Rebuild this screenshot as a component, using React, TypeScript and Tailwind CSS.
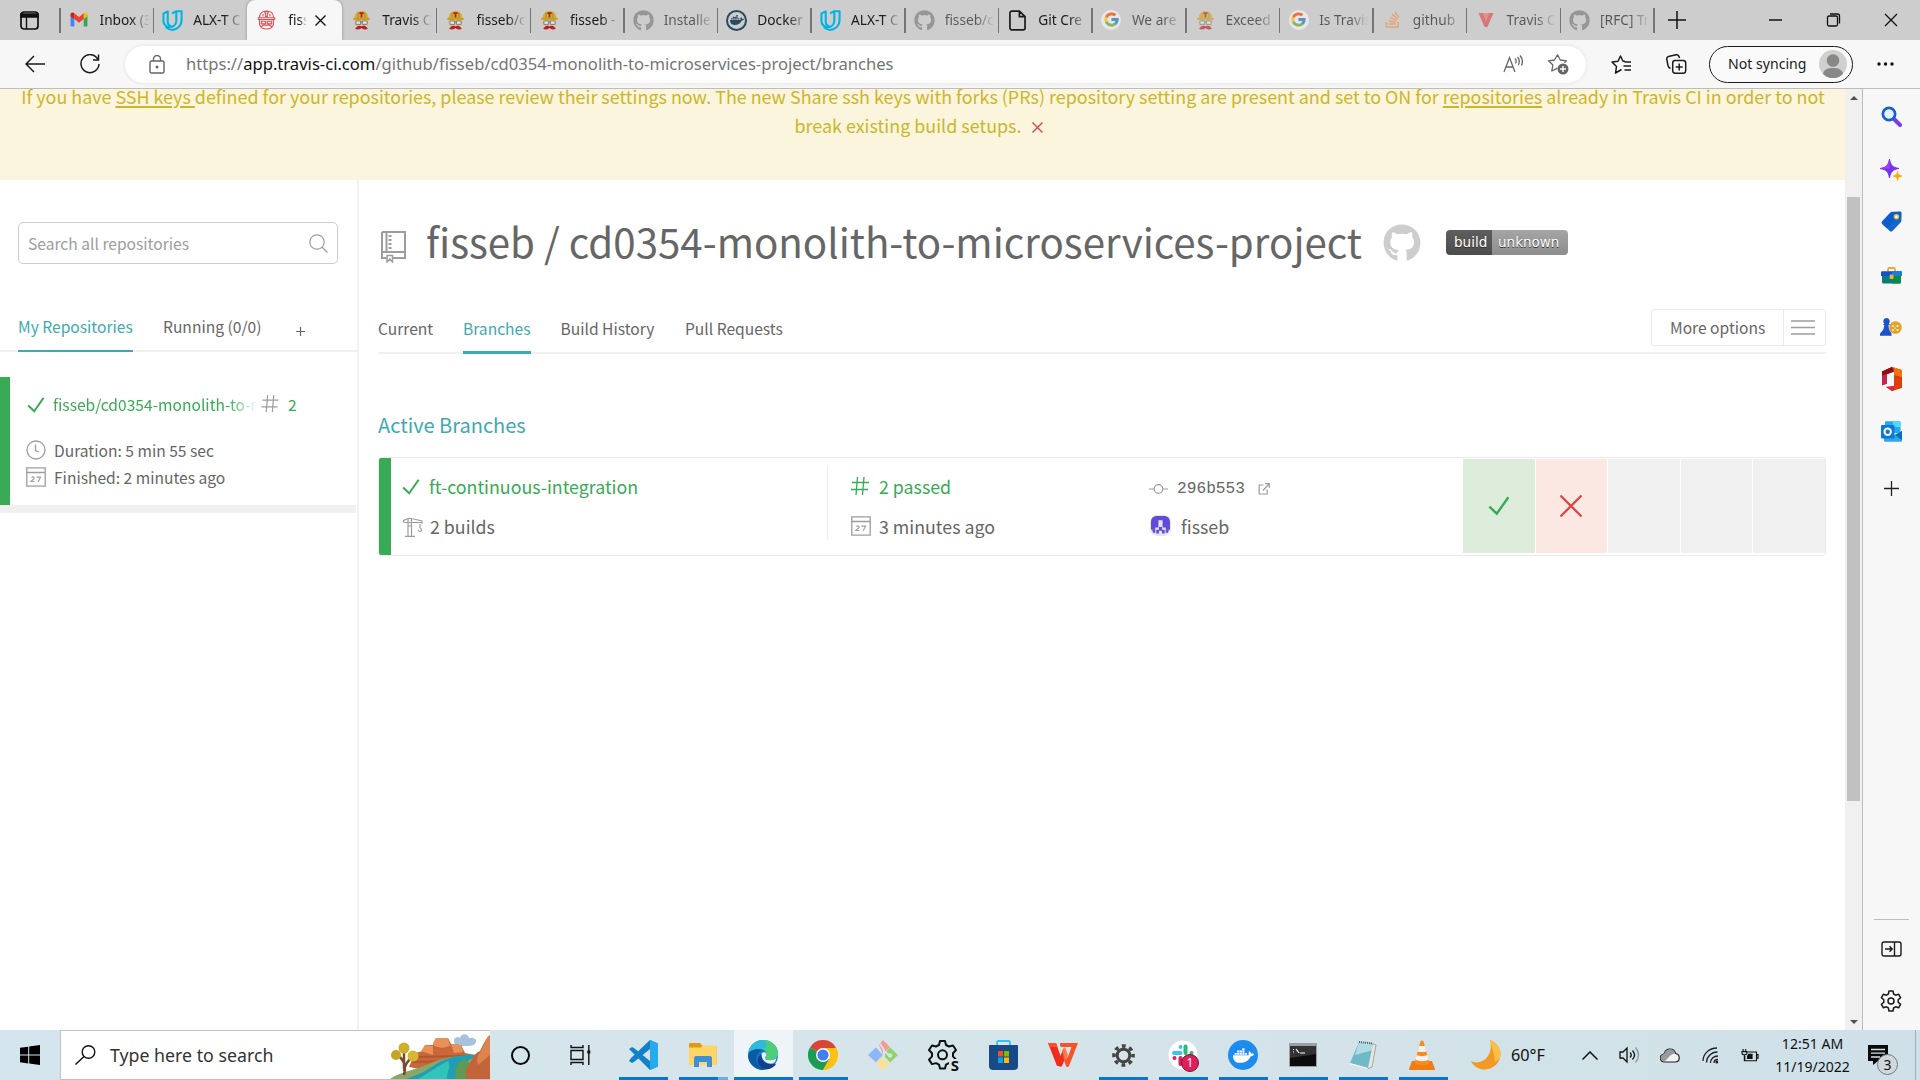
import type { ReactNode } from "react";
import { FaGithub, FaDocker, FaStackOverflow } from "react-icons/fa";
import { FcGoogle } from "react-icons/fc";

/* ---------- favicons ---------- */

function Gmail() {
  return (
    <svg viewBox="0 0 20 16" className="h-[15px] w-5">
      <path d="M1 3v11.500a1 1 0 0 0 1 1h3V6.500z" fill="#4285f4" />
      <path d="M19 3v11.500a1 1 0 0 1-1 1h-3V6.500z" fill="#34a853" />
      <path d="M15 1.200V7.500l4-3V2.800C19 .8 17 0 15.400 1z" fill="#fbbc04" />
      <path d="M5 7.500V1.200l5 4 5-4v6.300l-5 4z" fill="#ea4335" />
      <path d="M1 2.800v1.700l4 3V1.200C3 0 1 .8 1 2.800z" fill="#c5221f" />
    </svg>
  );
}

function Udacity() {
  return (
    <svg viewBox="0 0 22 22" className="h-[21px] w-[21px]" fill="none" stroke="#02b3e4" strokeWidth="2.200" strokeLinejoin="round">
      <path d="M1.500 3.500 6 1.500v10.500c0 2.500 1.500 4.500 4 5.500-1.500 1-3 .8-4.500 0-2.500-1.300-4-3.500-4-6.500z" />
      <path d="M10.500 3.500 15 1.300v9.500c0 3.500-2 6.500-5 7M15 1.300h5.500v9.500c0 5.500-4 9.500-9.500 10-3 0-5.500-1.300-7-3.500" />
    </svg>
  );
}

function TravisOutline() {
  return (
    <svg viewBox="0 0 22 24" className="h-[22px] w-[19px]" fill="none" stroke="#e5484d" strokeWidth="1.200">
      <path d="M3 9C3 4 6.500 1.500 11 1.500S19 4 19 9M1.500 9.500h19v2h-19zM9 2h4v2h-1v4h-2V4H9z" />
      <path d="M3 12v5c1 4 4.500 5.500 8 5.500s7-1.500 8-5.500v-5M5 13.500h5v3H5zM12 13.500h5v3h-5zM5 20c1.500-2.500 4-2.500 6-1.500 2-1 4.500-1 6 1.500M7 5v3M15 5v3" />
    </svg>
  );
}

function Travis() {
  return (
    <svg viewBox="0 0 22 24" className="h-[21px] w-[19px]">
      <path d="M3 11h16v6c-1 4-4 5.500-8 5.500S4 21 3 17z" fill="#dcc4a4" />
      <path d="M3 9.500C3 4 6.500 1 11 1s8 3 8 8.500z" fill="#d3ad35" />
      <path d="M7 3v6M15 3v6" stroke="#a98312" strokeWidth="1" />
      <path d="M8.500 2.500h5v2h-1.500v4h-2v-4H8.500z" fill="#b01e23" />
      <path d="M1.500 9h19v2.300h-19z" fill="#c79c22" />
      <path d="M4.500 12.500h5.500v4H4.500zM12 12.500h5.500v4H12zM10 13.500h2" fill="#dfe5e7" stroke="#77736c" strokeWidth="1" />
      <path d="M3.500 21.500c1.500-.5 2-3 4.500-3.300 1.500-.2 2.500.3 3 .8.500-.5 1.500-1 3-.8 2.500.3 3 2.800 4.500 3.300-2.500 1.300-6 1-7.500-.8-1.500 1.800-5 2.100-7.500.8z" fill="#b5202c" />
    </svg>
  );
}

function DockerRound() {
  return (
    <span className="flex h-[21px] w-[21px] items-center justify-center rounded-full border-2 border-[#2a4a5e]">
      <FaDocker size={14} color="#2a4a5e" />
    </span>
  );
}

function Page() {
  return (
    <svg viewBox="0 0 18 22" className="h-[21px] w-[17px]" fill="none" stroke="#1b1b1b" strokeWidth="1.800" strokeLinejoin="round">
      <path d="M3 1h8l6 6v12a2 2 0 0 1-2 2H3a2 2 0 0 1-2-2V3a2 2 0 0 1 2-2zM11 1v6h6" />
    </svg>
  );
}

function GoogleRound() {
  return (
    <span className="flex h-5 w-5 items-center justify-center rounded-full bg-white/80">
      <FcGoogle size={17} />
    </span>
  );
}

function Vee() {
  return (
    <svg viewBox="0 0 16 15" className="h-[14px] w-4">
      <path d="M0 0h5l3 8 3-8h5L9.500 15h-3z" fill="#e04a4a" />
      <path d="M4.500 0h7L8 9z" fill="#ec7070" />
    </svg>
  );
}

/* ---------- browser chrome ---------- */

const tabs: { icon: ReactNode; label: string; faded?: boolean; active?: boolean }[] = [
  { icon: <Gmail />, label: "Inbox (3" },
  { icon: <Udacity />, label: "ALX-T C" },
  { icon: <TravisOutline />, label: "fiss", active: true },
  { icon: <Travis />, label: "Travis C" },
  { icon: <Travis />, label: "fisseb/c" },
  { icon: <Travis />, label: "fisseb -" },
  { icon: <FaGithub size={21} color="#77797b" />, label: "Installe", faded: true },
  { icon: <DockerRound />, label: "Docker" },
  { icon: <Udacity />, label: "ALX-T C" },
  { icon: <FaGithub size={21} color="#77797b" />, label: "fisseb/c", faded: true },
  { icon: <Page />, label: "Git Cre" },
  { icon: <GoogleRound />, label: "We are", faded: true },
  { icon: <Travis />, label: "Exceed", faded: true },
  { icon: <GoogleRound />, label: "Is Travis", faded: true },
  { icon: <FaStackOverflow size={19} color="#f0904a" />, label: "github", faded: true },
  { icon: <Vee />, label: "Travis C", faded: true },
  { icon: <FaGithub size={21} color="#77797b" />, label: "[RFC] Tr", faded: true },
];

const fade = "[mask-image:linear-gradient(to_right,black_62%,transparent_100%)]";

function TabStrip() {
  return (
    <div className="flex h-10 bg-[#cdcdcd] text-[13.700px] text-[#1b1b1b]">
      <div className="flex w-[59px] shrink-0 items-center justify-center">
        <svg viewBox="0 0 19 19" className="h-[19px] w-[19px]" fill="none" stroke="#111" strokeWidth="1.700">
          <rect x="1" y="1" width="17" height="17" rx="3" />
          <path d="M1 3h17v3H1z" fill="#111" />
          <path d="M6.500 6v12" strokeWidth="1.400" />
        </svg>
      </div>
      {tabs.map((t, i) =>
        t.active ? (
          <div key={i} className="z-10 ml-px flex w-[95px] shrink-0 items-center rounded-t-lg bg-[#f7f7f7] pl-[9px] shadow-[0_0_3px_rgba(0,0,0,0.35)] [clip-path:inset(-4px_-4px_0_-4px)]">
            <span className="flex w-5 justify-center">{t.icon}</span>
            <span className="ml-[12px] w-[19px] overflow-hidden whitespace-nowrap [mask-image:linear-gradient(to_right,black_60%,transparent)]">{t.label}</span>
            <svg viewBox="0 0 11 11" className="ml-2 h-[11px] w-[11px]" stroke="#111" strokeWidth="1.400">
              <path d="M.5.500l10 10M10.500.500l-10 10" />
            </svg>
          </div>
        ) : (
          <div key={i} className="flex w-[93.650px] shrink-0 items-center">
            <span className={i === 3 || i === 2 ? "h-[25px] w-px" : "h-[25px] w-[1.500px] bg-[#757575]"} />
            <span className={t.faded ? "flex flex-1 items-center opacity-65" : "flex flex-1 items-center"}>
              <span className="ml-2 flex w-[21px] justify-center">{t.icon}</span>
              <span className={"ml-[10px] w-[50px] overflow-hidden whitespace-nowrap " + fade}>{t.label}</span>
            </span>
          </div>
        ),
      )}
      <div className="flex flex-1 items-center">
        <span className="h-[25px] w-[1.500px] bg-[#757575]" />
        <svg viewBox="0 0 18 18" className="ml-[13px] h-[18px] w-[18px]" stroke="#111" strokeWidth="1.500">
          <path d="M9 0v18M0 9h18" />
        </svg>
        <svg viewBox="0 0 130 14" className="mr-[21px] ml-auto h-[14px] w-[130px]" fill="none" stroke="#111" strokeWidth="1.300">
          <path d="M0 7h13M116 1l12 12M128 1l-12 12" />
          <rect x="58.500" y="3" width="10" height="10" rx="1.500" />
          <path d="M61 1h7.500a2 2 0 0 1 2 2v7.500" />
        </svg>
      </div>
    </div>
  );
}

function AddressBar() {
  return (
    <div className="flex h-[49px] items-center border-b-[1.500px] border-[#bdbdc0] bg-[#f7f7f7] pl-[25px]">
      <svg viewBox="0 0 20 18" className="h-[18px] w-5" fill="none" stroke="#1b1b1b" strokeWidth="1.500">
        <path d="M9 1L1 9l8 8M1 9h19" />
      </svg>
      <svg viewBox="0 0 20 20" className="ml-[35px] h-5 w-5" fill="none" stroke="#1b1b1b" strokeWidth="1.500">
        <path d="M18 5.500A9 9 0 1 0 19 10M18.500.5v5.500H13" />
      </svg>
      <div className="ml-[25px] flex h-[37px] w-[1461px] items-center rounded-full bg-white pl-6 shadow-[0_0_4px_rgba(0,0,0,0.1)]">
        <svg viewBox="0 0 16 19" className="h-[19px] w-4" fill="none" stroke="#666" strokeWidth="1.400">
          <rect x="1" y="6" width="14" height="12" rx="1.500" />
          <path d="M4.500 6V4a3.500 3.500 0 0 1 7 0v2" />
          <circle cx="8" cy="12" r=".8" fill="#666" />
        </svg>
        <span className="ml-[21px] text-[16.600px] text-[#757575]">
          https://<span className="text-[#111]">app.travis-ci.com</span>/github/fisseb/cd0354-monolith-to-microservices-project/branches
        </span>
        <svg viewBox="0 0 20 18" className="mr-6 ml-auto h-[18px] w-5" fill="none" stroke="#666" strokeWidth="1.300">
          <path d="M1 17L6.500 2.500 12 17M3 12h7M12 3.500c1.300 1.200 1.300 3.500.5 5M14.500 2c2 2.200 2 5.500.8 8M17 .5c2.500 3 2.800 7 1.500 10" />
        </svg>
        <svg viewBox="0 0 22 21" className="mr-[17px] h-[21px] w-[22px]" fill="none" stroke="#666" strokeWidth="1.300" strokeLinejoin="round">
          <path d="M10.500 14.200L4.800 17l1.100-6-4.400-4.200 6-.8L10.500.8l2.800 5.200 6.200.8-2 1.900" />
          <circle cx="16" cy="15" r="5.500" fill="#666" stroke="none" />
          <path d="M16 12v6M13 15h6" stroke="#fff" strokeWidth="1.400" />
        </svg>
      </div>
      <svg viewBox="0 0 21 19" className="ml-[25px] h-[19px] w-[21px]" fill="none" stroke="#1b1b1b" strokeWidth="1.500" strokeLinejoin="round">
        <path d="M10.500 14.500L4.500 18l1-6.500L1 7l6-.8L9.500 1l2.500 5.200h2M13.500 7H20M12.500 11H20M13.500 15H20" />
      </svg>
      <svg viewBox="0 0 21 20" className="ml-[34px] h-5 w-[21px]" fill="none" stroke="#1b1b1b" strokeWidth="1.500">
        <rect x="6.700" y="6.500" width="13" height="12.800" rx="2.500" />
        <path d="M13.200 9.500v7M9.700 13h7M4.500 14.500C3 14 2.500 13.500 2 11.500L.8 5.500C.5 4 1 3 2.500 2.500L10 .8c1.500-.3 2.500.3 3 1.700l.5 1.500" />
      </svg>
      <div className="ml-[22px] flex h-[37px] w-[144px] items-center rounded-full border-[1.500px] border-[#1b1b1b] bg-[#fafafa] pl-[18px] text-[14.100px] text-[#1b1b1b]">
        <span className="w-[79px] whitespace-nowrap">Not syncing</span>
        <svg viewBox="0 0 28 28" className="ml-[12px] h-7 w-7">
          <circle cx="14" cy="14" r="14" fill="#d2d0ce" />
          <circle cx="14" cy="10.500" r="6.300" fill="#8a8886" />
          <path d="M4 24c1-5 5-6 10-6s9 1 10 6a14 14 0 0 1-20 0z" fill="#8a8886" />
        </svg>
      </div>
      <svg viewBox="0 0 17 4" className="ml-6 h-1 w-[17px]" fill="#111">
        <circle cx="2" cy="2" r="1.700" />
        <circle cx="8.500" cy="2" r="1.700" />
        <circle cx="15" cy="2" r="1.700" />
      </svg>
    </div>
  );
}

function EdgeSidebar() {
  return (
    <aside className="flex w-[58px] shrink-0 flex-col items-center border-l-[1.500px] border-[#bdbdbd] bg-[#f7f7f7] pt-[17px] pr-px">
      <svg viewBox="0 0 21 21" className="h-[21px] w-[21px]" fill="none">
        <path d="M13 13l6 6" stroke="#7a3fe0" strokeWidth="4" strokeLinecap="round" />
        <circle cx="8" cy="8" r="6" stroke="#1560d8" strokeWidth="3" />
        <circle cx="8" cy="8" r="4.600" fill="#e4f4fd" />
      </svg>
      <svg viewBox="0 0 22 22" className="mt-[32px] h-[22px] w-[22px]">
        <path d="M9.500 0c1 6 3 8.500 9.500 9.500-6.500 1-8.500 3.500-9.500 9.500C8.500 13 6.500 10.500 0 9.500 6.500 8.500 8.500 6 9.500 0z" fill="#7432ee" stroke="#7432ee" strokeWidth="1" />
        <path d="M9.500 0v9.500H0C6.500 8.500 8.500 6 9.500 0z" fill="#a142f5" />
        <path d="M17.500 12.500c.5 3 1.500 4 4.500 4.500-3 .5-4 1.500-4.500 4.500-.5-3-1.500-4-4.500-4.500 3-.5 4-1.500 4.500-4.500z" fill="#f6ab0a" stroke="#f6ab0a" strokeWidth=".8" />
      </svg>
      <svg viewBox="0 0 21 21" className="mt-[30px] h-[21px] w-[21px]">
        <path d="M11.500.8L19 .6c1 0 1.600.6 1.600 1.600l-.2 7.300c0 1-.4 1.700-1 2.300l-8 8.200c-1 .9-1.700.9-2.600 0l-7.600-7c-.9-1-.9-1.700 0-2.700l8-8.500c.7-.6 1.300-1 2.300-1z" fill="#1264cf" />
        <path d="M1.200 10.300l8.500-9h10.500L6 17.500 1.200 13z" fill="#0c4fc7" opacity=".45" />
        <circle cx="15.400" cy="5.800" r="2" fill="#fff" stroke="#f4bd26" strokeWidth="1.400" />
      </svg>
      <svg viewBox="0 0 21 17" className="mt-[35px] h-[17px] w-[21px]">
        <path d="M7 5V2.500C7 1.500 7.500 1 8.500 1h4c1 0 1.500.5 1.500 1.500V5" fill="none" stroke="#e9a820" strokeWidth="1.800" />
        <path d="M1 8h19v7a1.500 1.500 0 0 1-1.500 1.500h-16A1.500 1.500 0 0 1 1 15z" fill="#0c7c7a" />
        <path d="M11 8h9v7a1.500 1.500 0 0 1-1.500 1.500H11z" fill="#0d8a4b" />
        <path d="M0 5.500C0 4.700.6 4.200 1.500 4.200h18c.9 0 1.500.5 1.500 1.300V9H0z" fill="#1450cc" />
        <path d="M11 4.200h8.500c.9 0 1.500.5 1.500 1.300V9H11z" fill="#1b7bd8" />
        <rect x="8.700" y="7.500" width="3.800" height="4.500" rx="1" fill="#f0b429" />
      </svg>
      <svg viewBox="0 0 22 18" className="mt-[34px] h-[18px] w-[22px]">
        <circle cx="15.500" cy="9.500" r="6.300" fill="#e6a323" />
        <g fill="#fff">
          <circle cx="13" cy="8" r="1" />
          <circle cx="17.500" cy="8" r="1" />
          <circle cx="13" cy="12" r="1" />
          <circle cx="17.500" cy="12" r="1" />
          <circle cx="15.300" cy="10" r=".8" />
        </g>
        <path d="M6.500 0a3.300 3.300 0 0 1 2.300 5.600L10 7H8.500c.1 3 .5 5 2.500 7.500.8.900.6 3.300.6 3.300H0s-.2-2.400.8-3.300C3.300 12.500 4 10 4.300 7H3l1.300-1.400A3.300 3.300 0 0 1 6.500 0z" fill="#1a52cf" />
      </svg>
      <svg viewBox="0 0 21 24" className="mt-[31px] h-6 w-[21px]">
        <path d="M11 0L1 4.500v13.700l5-1.700V7.300L13 4.500V19L5 20l6 4 10-3V3z" fill="#dc3e0c" />
        <path d="M11 0L1 4.500v13.700c0 .3 5-1.500 5-1.700V7.300L13 4.500z" fill="#c4264e" />
        <path d="M11 0L1 4.500v4L13 4.500z" fill="#8e0f12" />
        <path d="M5 20l8-1v4.300L11 24z" fill="#e5213c" />
        <path d="M13 .6l8 2.400v7l-8-2z" fill="#ee7410" />
      </svg>
      <svg viewBox="0 0 21 21" className="mt-[30px] h-[21px] w-[21px]">
        <path d="M4 1.500C4 .7 4.500.3 5.300.3h13c.8 0 1.200.4 1.200 1.200V12H4z" fill="#28a8ea" />
        <path d="M12 .3h6.300c.8 0 1.200.4 1.200 1.200V6H12z" fill="#50d9ff" />
        <path d="M3 12l10 2 8-4v9.500c0 .8-.5 1.200-1.300 1.200H4.300c-.8 0-1.300-.4-1.300-1.200z" fill="#28a8ea" />
        <path d="M21 10v9L14 14z" fill="#0f6cbd" />
        <rect y="4" width="13.500" height="13.500" rx="1.200" fill="#0f78d4" />
        <circle cx="6.700" cy="10.700" r="3.200" fill="none" stroke="#fff" strokeWidth="2" />
      </svg>
      <svg viewBox="0 0 15 15" className="mt-[39px] h-[15px] w-[15px]" stroke="#222" strokeWidth="1.300">
        <path d="M7.500 0v15M0 7.500h15" />
      </svg>
      <span className="mt-auto h-px w-[35px] bg-[#bdbdbd]" />
      <svg viewBox="0 0 21 16" className="mt-[21px] h-4 w-[21px]" fill="none" stroke="#1b1b1b" strokeWidth="1.400">
        <rect x="1" y="1" width="19" height="14" rx="2" />
        <path d="M13.500 1v14M4 8h7M8.500 5.300L11.200 8l-2.700 2.700" />
      </svg>
      <svg viewBox="0 0 22 22" className="mt-[33px] mb-[18px] h-[22px] w-[22px]" fill="none" stroke="#1b1b1b" strokeWidth="1.500" strokeLinejoin="round">
        <path d="M9 1h4l.6 3 2 1.200 3-1 2 3.400-2.400 2.200v2.400l2.400 2.200-2 3.400-3-1-2 1.200-.6 3H9l-.6-3-2-1.200-3 1-2-3.400 2.400-2.200V9.800L1.400 7.600l2-3.400 3 1 2-1.200z" />
        <circle cx="11" cy="11" r="3" />
      </svg>
    </aside>
  );
}

/* ---------- Travis page ---------- */

function Check({ className }: { className: string }) {
  return (
    <svg viewBox="0 0 20 18" className={className} fill="none" stroke="#39aa56" strokeWidth="2.200">
      <path d="M1.200 9.500L8 16 18.500 1" />
    </svg>
  );
}

function Hash({ className }: { className: string }) {
  return (
    <svg viewBox="0 0 18 18" className={className} fill="none" stroke="currentColor" strokeWidth="1.300">
      <path d="M6.500 0L5 18M13 0l-1.500 18M1 5.500h17M0 12.500h17" />
    </svg>
  );
}

function Calendar() {
  return (
    <svg viewBox="0 0 20 20" className="-mt-[2px] h-5 w-5 shrink-0" fill="none" stroke="#9d9d9d" strokeWidth="1.300">
      <path d="M.8.8h18.400v18.400H.8zM.8 5.500h18.400" />
      <path d="M5.500 10.500c1-1 3-.6 2.500.8-.3 1-2 2-3 3.200h3.300M10.500 10.200h4l-2.300 4.500" strokeWidth="1.200" />
    </svg>
  );
}

function LeftPanel() {
  return (
    <section className="w-[359px] shrink-0 border-r-2 border-[#f1f1f1] text-[15.600px] text-[#666]">
      <div className="mt-[42px] ml-[18px] flex h-[42px] w-[320px] items-center rounded-[5px] border border-[#cdcdcd] pr-[9px] pl-[9px]">
        <span className="pt-[2px] text-[#9d9d9d]">Search all repositories</span>
        <svg viewBox="0 0 19 19" className="ml-auto h-[19px] w-[19px]" fill="none" stroke="#9d9d9d" strokeWidth="1.200">
          <circle cx="8" cy="8" r="7.200" />
          <path d="M13 13l5.500 5.500" />
        </svg>
      </div>
      <div className="mt-[38px] flex h-[50px] border-b-2 border-[#f1f1f1] pl-[18px]">
        <span className="flex h-[50px] w-[115px] items-start border-b-2 border-[#3eaaaf] pt-[12px] leading-6 whitespace-nowrap text-[#3eaaaf]">My Repositories</span>
        <span className="ml-[30px] w-[99px] pt-[12px] leading-6 whitespace-nowrap">Running (0/0)</span>
        <svg viewBox="0 0 9 9" className="mt-[25px] ml-[34px] h-[9px] w-[9px]" stroke="#666" strokeWidth="1.200">
          <path d="M4.500 0v9M0 4.500h9" />
        </svg>
      </div>
      <div className="mt-[25px] flex h-[136px] w-[356px] border-b-8 border-[#f0f0f0]">
        <span className="w-[10px] bg-[#39aa56]" />
        <div className="flex-1 pl-4">
          <div className="mt-[16px] flex h-6 items-center text-[#39aa56]">
            <Check className="ml-px h-4 w-[18px]" />
            <span className="ml-2 w-[205px] overflow-hidden whitespace-nowrap [mask-image:linear-gradient(to_right,black_85%,transparent)]">fisseb/cd0354-monolith-to-m</span>
            <span className="ml-[3px] text-[#9d9d9d]"><Hash className="-mt-[3px] h-[17px] w-[18px]" /></span>
            <span className="ml-[9px]">2</span>
          </div>
          <div className="mt-[20px] flex h-[27px] items-center">
            <svg viewBox="0 0 20 20" className="-mt-px h-5 w-5" fill="none" stroke="#9d9d9d" strokeWidth="1.300">
              <circle cx="10" cy="10" r="9" />
              <path d="M9.500 4.500v6l3.500 1.500" />
            </svg>
            <span className="ml-2">Duration: 5 min 55 sec</span>
          </div>
          <div className="flex h-[27px] items-center">
            <Calendar />
            <span className="ml-2">Finished: 2 minutes ago</span>
          </div>
        </div>
      </div>
    </section>
  );
}

function BranchRow() {
  return (
    <div className="mt-[16px] flex h-[99px] rounded-[3px] border border-[#ebebeb] text-[17.800px]">
      <span className="w-3 rounded-l-[2px] bg-[#39aa56]" />
      <div className="flex w-[436px] flex-col pt-[15px] pl-[11px]">
        <div className="flex h-[26px] items-center text-[#39aa56]">
          <Check className="mt-[2px] h-[18px] w-[18px]" />
          <span className="ml-[9px]">ft-continuous-integration</span>
        </div>
        <div className="mt-[14px] flex h-[27px] items-center">
          <svg viewBox="0 0 20 20" className="ml-px h-5 w-5" fill="none" stroke="#9d9d9d" strokeWidth="1.200">
            <path d="M5 19V1.500h3.500V19M2 19.300h10M.5 5V3.500l4.500-2M8.500 1.500L19 4v3M.5 5.500h18.500M5 9h3.500M17 7v4M17 11c2 .5 2 3.500 0 3.500-1 0-1.500-.5-1.500-1.500" />
          </svg>
          <span className="ml-[7px]">2 builds</span>
        </div>
      </div>
      <div className="mt-2 mb-[15px] w-px bg-[#ececec]" />
      <div className="flex w-[299px] flex-col pt-[15px] pl-[23px]">
        <div className="flex h-[26px] items-center text-[#39aa56]">
          <Hash className="h-[18px] w-[18px]" />
          <span className="ml-[10px]">2 passed</span>
        </div>
        <div className="mt-[14px] flex h-[27px] items-center">
          <Calendar />
          <span className="ml-2">3 minutes ago</span>
        </div>
      </div>
      <div className="flex w-[336px] flex-col pt-[18px] pl-[22px]">
        <div className="flex h-[27px] items-center">
          <svg viewBox="0 0 19 12" className="-mt-px h-3 w-[19px]" fill="none" stroke="#9d9d9d" strokeWidth="1.200">
            <circle cx="9.500" cy="6" r="4.300" />
            <path d="M0 6h5M14 6h5" />
          </svg>
          <span className="ml-[9px] font-['Liberation_Mono',monospace] text-[16.200px]">296b553</span>
          <svg viewBox="0 0 12 12" className="-mt-px ml-[13px] h-3 w-3" fill="none" stroke="#9d9d9d" strokeWidth="1.200">
            <path d="M5.500 2H1.200v9h8V6.500M7 .7h4.300V5M11 1L5 7.500" />
          </svg>
        </div>
        <div className="mt-[10px] flex h-[27px] items-center">
          <svg viewBox="0 0 20 20" className="-mt-[2px] ml-px h-[21px] w-[21px]">
            <rect width="20" height="20" rx="7" fill="#e6e3ef" />
            <path d="M7 1h6c4 0 6 2 6 6v7h-4v-2h-3V5H8v7H5v2H1V7c0-4 2-6 6-6z" fill="#5f4bd8" />
            <path d="M2 14h3v3H3zM8.500 11.500h3V14H14v3.500h-2.500V15h-3v2.500H6V14h2.500zM15 14h3l-1 3h-2z" fill="#5f4bd8" />
          </svg>
          <span className="ml-[10px]">fisseb</span>
        </div>
      </div>
      <div className="mt-px mb-[2px] flex flex-1 gap-px">
        <span className="flex flex-1 items-center justify-center bg-[#deecdc]">
          <Check className="h-5 w-[22px]" />
        </span>
        <span className="flex flex-1 items-center justify-center bg-[#fbe8e2]">
          <svg viewBox="0 0 22 22" className="h-[22px] w-[22px]" stroke="#db4545" strokeWidth="2.300" strokeLinecap="round">
            <path d="M1.200 1.200l19.600 19.600M20.800 1.200L1.200 20.800" />
          </svg>
        </span>
        <span className="flex-1 bg-[#f0f0f0]" />
        <span className="flex-1 bg-[#f0f0f0]" />
        <span className="flex-1 bg-[#f0f0f0]" />
      </div>
    </div>
  );
}

function MainPanel() {
  return (
    <main className="flex-1 pr-[19px] pl-[19px] text-[#666]">
      <div className="flex h-[124px] items-center">
        <svg viewBox="0 0 25 32" className="mt-[10px] ml-[3px] h-8 w-[25px]" fill="none" stroke="#9d9d9d" strokeWidth="2">
          <path d="M1 1h23v26h-12M6 27H1V1M1 21h23M5.500 1v20" />
          <path d="M9 4v15" strokeDasharray="2 2" strokeWidth="3" />
          <path d="M6 24.500h5.500V31L8.800 28 6 31z" strokeWidth="1.500" />
        </svg>
        <h1 className="-mt-[2px] ml-[20px] text-[40.250px] leading-[50px] whitespace-nowrap">fisseb / cd0354-monolith-to-microservices-project</h1>
        <FaGithub size={38} color="#cdcdcd" className="mt-px ml-[21px]" />
        <div className="mt-px ml-[25px] flex h-[25px] overflow-hidden rounded-[4px] font-['DejaVu_Sans',sans-serif] text-[13.500px] leading-[25px] text-white [text-shadow:0_1px_0_#333]">
          <span className="w-[46px] bg-linear-to-b from-[#5e5e5e] to-[#4c4c4c] pl-2">build</span>
          <span className="w-[76px] bg-linear-to-b from-[#a5a5a5] to-[#8d8d8d] pl-[6px]">unknown</span>
        </div>
      </div>
      <div className="flex h-[50px] border-b-2 border-[#f1f1f1] text-[15.600px] leading-6 whitespace-nowrap">
        <span className="w-[55px] pt-[12px]">Current</span>
        <span className="ml-[30px] h-[50px] w-[68px] border-b-[3px] border-[#3eaaaf] pt-[12px] text-[#3eaaaf]">Branches</span>
        <span className="ml-[29.500px] w-[95px] pt-[12px]">Build History</span>
        <span className="ml-[29.500px] w-[99px] pt-[12px]">Pull Requests</span>
        <div className="mt-[5px] ml-auto flex h-[37px] w-[175px] items-center rounded-[3px] border border-[#ebebeb]">
          <span className="flex h-full w-[132px] items-center border-r border-[#ebebeb] pb-[2px] pl-[18px]">More options</span>
          <svg viewBox="0 0 24 15" className="ml-[7px] h-[15px] w-6" stroke="#9d9d9d" strokeWidth="1.500">
            <path d="M0 1h24M0 7.500h24M0 14h24" />
          </svg>
        </div>
      </div>
      <h2 className="mt-[55px] text-[20px] leading-[32px] text-[#3eaaaf]">Active Branches</h2>
      <BranchRow />
    </main>
  );
}

function TravisPage() {
  return (
    <div className="flex w-[1845px] shrink-0 flex-col bg-white font-['Noto_Sans_CJK_SC',sans-serif]">
      <div className="h-[91px] overflow-hidden bg-[#faf5dc] text-center text-[17.920px] leading-[29px] whitespace-nowrap text-[#cdb52a]">
        <div className="-mt-[7px] -mr-px">
          If you have <span className="underline decoration-[1.500px] underline-offset-2">SSH keys </span>defined for your repositories, please review their settings now. The new Share ssh keys with forks (PRs) repository setting are present and set to ON for{" "}
          <span className="underline decoration-[1.500px] underline-offset-2">repositories</span> already in Travis CI in order to not
        </div>
        <div className="flex items-center justify-center pr-[7px]">
          break existing build setups.
          <svg viewBox="0 0 11 11" className="mt-[3px] ml-[11px] h-[11px] w-[11px]" stroke="#db4545" strokeWidth="1.400">
            <path d="M.5.500l10 10M10.500.500l-10 10" />
          </svg>
        </div>
      </div>
      <div className="flex flex-1">
        <LeftPanel />
        <MainPanel />
      </div>
    </div>
  );
}

function ScrollBar() {
  return (
    <div className="flex w-[17px] shrink-0 flex-col items-center bg-[#f0f0f0] pt-[7px] pb-[6px]">
      <svg viewBox="0 0 8 4" className="h-1 w-2" fill="#505050">
        <path d="M4 0l4 4H0z" />
      </svg>
      <span className="mt-[97px] h-[604px] w-[13px] bg-[#c1c1c1]" />
      <svg viewBox="0 0 8 4" className="mt-auto h-1 w-2" fill="#505050">
        <path d="M4 4l4-4H0z" />
      </svg>
    </div>
  );
}

/* ---------- taskbar ---------- */

function Landscape() {
  return (
    <svg viewBox="0 0 100 48" className="h-12 w-[100px]">
      <path d="M64 10c0-4 4-5 6-3 1-5 8-5 9 0 4-1 8 1 7 4s-4 4-8 4H69c-4 0-5-3-5-5z" fill="#a7c3dc" />
      <path d="M19 36l6-14 8-2 2-6h8l3-7h12l3 6 10 1 4 8 10 2 3 6-20 8H30z" fill="#c9663a" />
      <path d="M43 12l3-5h12l2 8-8 2-8-2zM61 13l10 1 2 7-9 1zM31 20l4-6 8 1v9z" fill="#e89158" />
      <path d="M24 26l55-1M22 31l50-1" stroke="#a64b26" strokeWidth="2" opacity=".6" />
      <path d="M0 48c10-7 25-9 36-14s24-9 38-9l10-1v24H0z" fill="#8aa765" />
      <path d="M16 48c18-6 22-10 32-16s26-9 40-8c-12 6-20 12-16 24z" fill="#1f9fb4" />
      <path d="M28 48c12-7 20-13 30-18 4 6-2 12-1 18z" fill="#31c4ba" />
      <path d="M100 4v44H76c-4-6 0-12 4-16 4-8 6-10 10-12 3-6 6-13 10-16z" fill="#c2633a" />
      <path d="M100 4v20l-12 10c-2-6 0-10 3-14 3-6 5-13 9-16z" fill="#dc8450" />
      <path d="M66 48c-2-10 0-15 8-20l6 4c-4 5-6 10-3 16z" fill="#5e9a56" />
      <path d="M14 44c2-7 1-13-4-18M14 40c1-7 4-10 8-14M14 38V22" stroke="#7a4a2c" strokeWidth="2.500" fill="none" />
      <circle cx="14" cy="17" r="5.500" fill="#cfae2a" />
      <circle cx="6" cy="24" r="5" fill="#c6a323" />
      <circle cx="23" cy="25" r="5.500" fill="#d8b832" />
    </svg>
  );
}

const VSCode = (
  <svg viewBox="0 0 30 30" className="h-[30px] w-[30px]">
    <path d="M22 0l8 3.500v23L22 30 3 11l-2-2 3-2 2 1 16 13V9L6 22l-2 1-3-2 2-3z" fill="#1282c8" />
    <path d="M22 0l8 3.500v23L22 30z" fill="#29a9ee" />
  </svg>
);

const Folder = (
  <svg viewBox="0 0 28 24" className="h-6 w-7">
    <path d="M0 1.500C0 .5.500 0 1.500 0H11l2.500 3H26c1 0 1.500.5 1.500 1.500V22H0z" fill="#e09b0d" />
    <path d="M0 4.500h12l2-2h13.500V22H0z" fill="#ffd565" />
    <path d="M5 24v-9c0-1 .8-2 2-2h14c1.200 0 2 1 2 2v9h-5v-5h-8v5z" fill="#3f8fd6" />
  </svg>
);

const Edge = (
  <svg viewBox="0 0 30 30" className="h-[30px] w-[30px]">
    <circle cx="15" cy="15" r="15" fill="#1176c8" />
    <path d="M.3 13C1.500 5 8 0 15 0c8.500 0 15 6 15 13 0 5-4 7-8 7-3 0-5-1-5-2.500 0-1 1.500-1.500 1.500-3.500 0-3-3.500-5-7.500-5-5 0-9 2-10.700 4z" fill="#2fb9dc" />
    <path d="M15 0c8.500 0 15 6 15 13 0 5-4 7-8 7-3 0-5-1-5-2.500 0-1 1.500-1.500 1.500-3.500 0-2-1-4-3.500-5.500C20 8 20 3 15 0z" fill="#4fce7a" />
    <path d="M10 14c-3 3-3.500 13 7.500 15.800C9 31 .8 25 .1 16 1 9.500 10 8 14 10c-2 .8-3.500 2.500-4 4z" fill="#0c59a4" />
    <path d="M13.500 14c-1 6 4.500 11.500 12 10 2-.5 3-.3 1.500 1.500C23 30 15 30.500 11.500 26S10 16 13.500 14z" fill="#12408c" />
    <path d="M13.800 13c1-1 4.500-1.500 4.500 1.500 0 1.500-1.300 2.200-1.300 3.200 0 1.800 2 2.500 5 2.500 2.500 0 5-.7 6.500-2.500-.5 3-2 5.500-4 5.800-5 1-12-3-10.700-10.500z" fill="#eaf1f5" />
  </svg>
);

const Chrome = (
  <svg viewBox="0 0 30 30" className="h-[30px] w-[30px]">
    <path d="M15 15L2 7.500a15 15 0 0 1 26 0z" fill="#dc4437" />
    <path d="M15 15h13L28 7.500A15 15 0 0 1 15 30l-2-.2z" fill="#fbc116" />
    <path d="M15 15l6.500 3.800L15 30A15 15 0 0 1 2 7.500z" fill="#1a9c52" />
    <path d="M15 8h13a15 15 0 0 1-13 22l6.200-11z" fill="#fbc116" />
    <circle cx="15" cy="15" r="7" fill="#fff" />
    <circle cx="15" cy="15" r="5.600" fill="#3f7ff0" />
  </svg>
);

const Git = (
  <svg viewBox="0 0 30 30" className="h-[30px] w-[30px]">
    <path d="M15 0l7 7-7 7-4-9z" fill="#f59a98" />
    <path d="M8 7.500l7 7.500-7 7.500-8-7.500z" fill="#8db6fb" />
    <path d="M22 7.500l8 7.500-8 7.500-7-7.500z" fill="#8fd36a" />
    <path d="M15 15.500l7 7-7 7.500-7-7.500z" fill="#fbe28a" />
    <path d="M12 4l4 6v10M16 11l6 5" stroke="#d7e4ea" strokeWidth="2" fill="none" />
    <circle cx="16" cy="20" r="2.300" fill="#d7e4ea" />
    <circle cx="22" cy="15.500" r="2.300" fill="#d7e4ea" />
  </svg>
);

const gearPath = "M12 1h5l1 4 3 1.500 4-1 3 4.500-3 3.200v3.200l3 3.200-3 4.500-4-1-3 1.500-1 4h-5l-1-4-3-1.500-4 1L1 19.600l3-3.200v-3.200L1 10l3-4.500 4 1L11 5z";

const GearS = (
  <div className="relative">
    <svg viewBox="0 0 30 30" className="h-[30px] w-[30px]" fill="none" stroke="#111" strokeWidth="2">
      <path d={gearPath} strokeLinejoin="round" />
      <circle cx="14.500" cy="14.800" r="4.500" />
    </svg>
    <span className="absolute -right-[1px] -bottom-[2px] bg-[#d6e5eb] pl-[2px] text-[15px] leading-[13px] font-bold text-[#111]">S</span>
  </div>
);

const Store = (
  <svg viewBox="0 0 29 30" className="h-[30px] w-[29px]">
    <path d="M8 5V2.500C8 1.500 8.500 1 9.500 1h10c1 0 1.500.5 1.500 1.500V5" fill="none" stroke="#36c0f0" strokeWidth="1.800" />
    <path d="M0 6c0-.6.400-1 1-1h27c.6 0 1 .4 1 1v20c0 2.500-1.500 4-4 4H4c-2.500 0-4-1.500-4-4z" fill="#174a87" />
    <path d="M9 11h5v5.500H9z" fill="#f25022" />
    <path d="M15 11h5v5.500h-5z" fill="#7fba00" />
    <path d="M9 17.500h5V23H9z" fill="#00a4ef" />
    <path d="M15 17.500h5V23h-5z" fill="#ffb900" />
  </svg>
);

const Wps = (
  <svg viewBox="0 0 30 24" className="h-6 w-[30px]">
    <path d="M0 0h8l4.500 13L15.500 5l3 7-4.500 11c-.6 1-2.400 1-3 0H9z" fill="#ee2b1c" />
    <path d="M0 0h8l1.500 4H2z" fill="#f9512a" />
    <path d="M12 0h18l-9 23c-.5 1.300-2.500 1.300-3 0l-3-9 2-5 2.500 6 4-11h-9c-1.500 0-2 0-2.500-1.500z" fill="#f9512a" />
    <path d="M14 8l3-4 3 8-2.500 6z" fill="#ff7a45" />
  </svg>
);

const Gear = (
  <svg viewBox="0 0 23 23" className="h-[23px] w-[23px]" fill="none" stroke="#444">
    <circle cx="11.500" cy="11.500" r="6.300" strokeWidth="3" />
    <circle cx="11.500" cy="11.500" r="9.500" strokeWidth="3.600" strokeDasharray="3.800 3.661" strokeDashoffset="1.900" />
  </svg>
);

const Slack = (
  <div className="relative">
    <svg viewBox="0 0 30 30" className="h-[30px] w-[30px]">
      <circle cx="15" cy="15" r="14.500" fill="#fff" />
      <g strokeWidth="4" strokeLinecap="round">
        <path d="M12.500 7v0M6 13h6.500" stroke="#36c5f0" />
        <path d="M17.500 6.500V13M23.500 13v0" stroke="#2eb67d" />
        <path d="M6.500 18v0M12.500 18v6" stroke="#e01e5a" />
        <path d="M18 18h6" stroke="#ecb22e" />
      </g>
    </svg>
    <span className="absolute top-[14px] left-[13px] flex h-[18px] w-[18px] items-center justify-center rounded-full border border-[#7b1338] bg-[#e01e5a] text-[12px] leading-none text-white">1</span>
  </div>
);

const DockerApp = (
  <span className="flex h-[30px] w-[30px] items-center justify-center rounded-full bg-[#1d8cee]">
    <FaDocker size={21} color="#fff" />
  </span>
);

const Cmd = (
  <svg viewBox="0 0 28 24" className="h-6 w-7">
    <rect width="28" height="24" fill="#9aa0a3" />
    <path d="M1 3h26v20H1z" fill="#0c0c0c" />
    <path d="M1 3h26v8L1 15z" fill="#333" />
    <path d="M4 6.500h1M4 9h1M7 6l3 4M11 10h5" stroke="#fff" strokeWidth="1.200" />
  </svg>
);

const Notepad = (
  <svg viewBox="0 0 28 28" className="h-7 w-7">
    <path d="M21 2l6 2-4 22-5 2z" fill="#e9e6dc" stroke="#8d8d86" strokeWidth=".7" />
    <path d="M10 1l14 1.500-5 24.500L1 22z" fill="#6fb9c9" />
    <path d="M10 1l14 1.500-1.500 7L6 14z" fill="#b0dce3" />
    <path d="M10 1l14 1.500" stroke="#4a6068" strokeWidth="2" strokeDasharray="1 1" />
    <path d="M1 22l18 5-.5 1L0 23z" fill="#f5f5f5" />
  </svg>
);

const Vlc = (
  <svg viewBox="0 0 26 30" className="mr-[2px] h-[30px] w-[26px]">
    <path d="M3 21h20l3 8c0 .6-.4 1-1 1H1c-.6 0-1-.4-1-1z" fill="#f07c12" />
    <path d="M11.500 1.500C12 0 14 0 14.500 1.500L20.500 23c-2 3-13 3-15 0z" fill="#f68b1e" />
    <path d="M10.200 6h5.600l1.500 5.200c-2 1.200-6.600 1.200-8.600 0zM7.600 15c3 1.500 7.800 1.500 10.800 0l1.300 4.500c-3 2.300-10.400 2.300-13.400 0z" fill="#f3f3f3" />
  </svg>
);

const apps: { icon: ReactNode; running?: boolean; active?: boolean; split?: boolean }[] = [
  { icon: VSCode, running: true },
  { icon: Folder, running: true, split: true },
  { icon: Edge, running: true, active: true },
  { icon: Chrome, running: true },
  { icon: Git },
  { icon: GearS },
  { icon: Store },
  { icon: Wps },
  { icon: Gear, running: true },
  { icon: Slack, running: true },
  { icon: DockerApp, running: true },
  { icon: Cmd, running: true },
  { icon: Notepad, running: true },
  { icon: Vlc, running: true },
];

function Taskbar() {
  return (
    <footer className="flex h-[50px] items-stretch bg-linear-to-r from-[#d4e5ee] via-[#d6e5ea] to-[#cfe0e8] text-[#111]">
      <div className="flex w-[60px] items-center justify-center">
        <svg viewBox="0 0 20 20" className="h-5 w-5" fill="#000">
          <path d="M0 2.800L8.200 1.700v7.900H0zM9.200 1.500L20 0v9.600H9.200zM0 10.500h8.200v7.900L0 17.300zM9.200 10.500H20V20L9.200 18.500z" />
        </svg>
      </div>
      <div className="flex w-[430px] items-center border border-r-0 border-[#bfc3c6] bg-white pl-[14px]">
        <svg viewBox="0 0 21 20" className="h-5 w-[21px]" fill="none" stroke="#111" strokeWidth="1.400">
          <circle cx="13.500" cy="7" r="6.300" />
          <path d="M9 11.500L.5 19.500" />
        </svg>
        <span className="ml-[14px] text-[17.750px] text-[#333]">Type here to search</span>
        <span className="ml-auto"><Landscape /></span>
      </div>
      <div className="flex w-[60px] items-center justify-center">
        <span className="h-[19px] w-[19px] rounded-full border-[2.500px] border-[#0a0a0a]" />
      </div>
      <div className="flex w-[60px] items-center justify-center">
        <svg viewBox="0 0 21 20" className="h-5 w-[21px]" fill="none" stroke="#111" strokeWidth="1.400">
          <path d="M1 5.500h12v9H1zM1 0v2.500h12V0M1 20v-2.500h12V20M18.800 0v20" />
          <path d="M17.300 5.500h3v3h-3z" fill="#111" stroke="none" />
        </svg>
      </div>
      <div className="ml-[3px] flex">
        {apps.map((a, i) => (
          <div key={i} className="flex w-[60px] justify-center">
            <div className={a.active ? "flex w-[59px] flex-col bg-[#eef4f8]" : "flex w-[49px] flex-col"}>
              <div className="flex flex-1 items-center justify-center pt-[3px]">{a.icon}</div>
              {a.running ? (
                <div className="flex h-[3px] bg-[#0078d7]">{a.split && <span className="ml-auto w-[10px] bg-[#69afe5]" />}</div>
              ) : (
                <div className="h-[3px]" />
              )}
            </div>
          </div>
        ))}
      </div>
      <div className="ml-[18px] flex items-center">
        <svg viewBox="0 0 30 30" className="h-[30px] w-[30px]">
          <path d="M19 0c8 3 12 11 10 18-3 10-14 14-22 10-3-1.500-6-4-7-7 3 2 9 2 13-1 6-4 8-12 6-20z" fill="#f29a25" />
          <path d="M19 0c8 3 12 11 10 18l-5 4c0-8-3-13-5-22z" fill="#fbbf45" />
        </svg>
        <span className="ml-[10px] w-[36px] text-[16.250px] whitespace-nowrap">60°F</span>
        <svg viewBox="0 0 16 9" className="ml-[35px] h-[9px] w-4" fill="none" stroke="#111" strokeWidth="1.500">
          <path d="M.5 8.500L8 1l7.500 7.500" />
        </svg>
        <svg viewBox="0 0 21 18" className="ml-[21px] h-[18px] w-[21px]" fill="none" stroke="#111" strokeWidth="1.300">
          <path d="M1 6h3l4-4v14l-4-4H1zM11 6.500c1.500 1.500 1.500 3.500 0 5M13.500 4.500c2.500 2.700 2.500 6.300 0 9" />
          <path d="M16.500 1.500c4 4.500 4 10.500 0 15" stroke="#8a9499" />
        </svg>
        <svg viewBox="0 0 20 15" className="ml-[20px] h-[15px] w-5" stroke="#222" strokeWidth="1.200">
          <path d="M4.500 14a4 4 0 0 1-.5-8C5 2.500 7.500 1 10 1c3 0 5 2 5.500 4.500 2.500.3 3.700 2 3.700 4.500S17.500 14 15 14z" fill="#f2f2f2" />
          <path d="M4.500 13.400c-3-.4-4-2.400-3.800-4C1 7.500 2.500 6.500 4 6.300 5 2.800 7.500 1.600 10 1.600c3 0 4.500 1.400 5 3.900-3 .5-5 2-7 4.500z" fill="#9a9a9a" stroke="none" />
        </svg>
        <svg viewBox="0 0 17 17" className="ml-[22px] h-[17px] w-[17px]" fill="none" stroke="#222" strokeWidth="1.300">
          <path d="M1 14C1 7 7 1 15 1M4.500 15.500C4.500 10 9 5 15.500 5M8.500 16c0-4 3-7 7.500-7" />
          <path d="M12 16c0-2 1.500-3.500 4-3.500" />
          <circle cx="14.800" cy="15" r="1.500" fill="#222" stroke="none" />
        </svg>
        <svg viewBox="0 0 20 15" className="ml-[21px] h-[13px] w-5" fill="none" stroke="#111" strokeWidth="1.300">
          <path d="M6.500 3.500h11v10H4V8M17.500 6.500h1.800v4h-1.800M2 0v3M5 0v3M.8 3h5.500v2.500c0 1.500-5.500 1.500-5.500 0zM3.500 7v7" />
          <path d="M8 5.500h5v6H6.500V8z" fill="#111" stroke="none" />
        </svg>
      </div>
      <div className="ml-[14px] flex w-[77px] flex-col items-center pt-[2px] text-[14.050px] leading-[23px] whitespace-nowrap">
        <span>12:51 AM</span>
        <span>11/19/2022</span>
      </div>
      <div className="relative ml-[17px] w-[34px] pt-[15px]">
        <svg viewBox="0 0 20 20" className="h-5 w-5">
          <path d="M0 0h20v16H10l-5 4v-4H0z" fill="#0a0a0a" />
          <path d="M3 4.500h14M3 8.200h14M3 12h9" stroke="#d5e3ea" strokeWidth="1.300" />
        </svg>
        <span className="absolute top-[24px] left-[9px] flex h-[21px] w-[21px] items-center justify-center rounded-full border border-[#777] bg-[#cfd8dc] text-[14px] leading-none">3</span>
      </div>
      <span className="ml-auto w-[5px] border-l border-[#9fb0b8]" />
    </footer>
  );
}

export default function App() {
  return (
    <div className="flex h-[1080px] w-[1920px] flex-col overflow-hidden bg-white font-['Noto_Sans','Open_Sans',sans-serif]">
      <TabStrip />
      <AddressBar />
      <div className="flex min-h-0 flex-1">
        <TravisPage />
        <ScrollBar />
        <EdgeSidebar />
      </div>
      <Taskbar />
    </div>
  );
}
